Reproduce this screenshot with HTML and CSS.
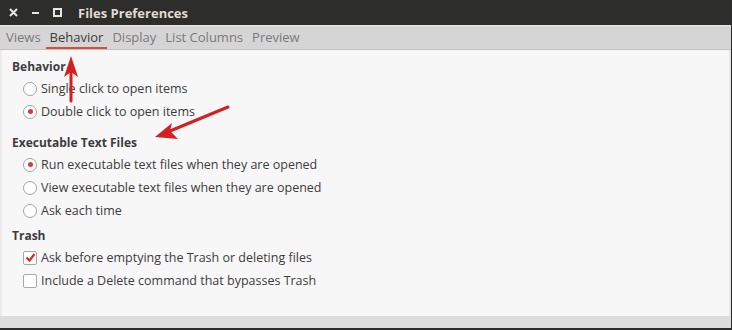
FILE: index.html
```
<html>

<head>
	<link rel="stylesheet" href="styles.css">
</head>

<body>
	<div class="window">
		<div class="titlebar">
			<span class="win-btn">
				<svg width="9" height="9" viewBox="0 0 9 9"><path d="M1,1 L8,8 M8,1 L1,8" stroke="#e6e6e6" stroke-width="2" /></svg>
			</span>
			<span class="win-btn">
				<svg width="9" height="9" viewBox="0 0 9 9"><path d="M1,5 L8,5" stroke="#e6e6e6" stroke-width="2" /></svg>
			</span>
			<span class="win-btn">
				<svg width="9" height="9" viewBox="0 0 9 9"><rect x="1" y="1" width="7" height="7" fill="none" stroke="#e6e6e6" stroke-width="2" /></svg>
			</span>
			<span class="title">Files Preferences</span>
		</div>

		<div class="tabs">
			<span class="tab">Views</span>
			<span class="tab active">Behavior</span>
			<span class="tab">Display</span>
			<span class="tab">List Columns</span>
			<span class="tab">Preview</span>
		</div>

		<div class="content">
			<div class="section">
				<div class="section-title">Behavior</div>
				<div class="row"><span class="radio"></span>Single click to open items</div>
				<div class="row"><span class="radio checked"></span>Double click to open items</div>
			</div>
			<div class="section exec">
				<div class="section-title">Executable Text Files</div>
				<div class="row"><span class="radio checked"></span>Run executable text files when they are opened</div>
				<div class="row"><span class="radio"></span>View executable text files when they are opened</div>
				<div class="row"><span class="radio"></span>Ask each time</div>
			</div>
			<div class="section trash">
				<div class="section-title">Trash</div>
				<div class="row"><span class="check checked">
					<svg width="11" height="11" viewBox="0 0 11 11"><path d="M1.5,5.5 L4.5,8.5 L9.5,2" fill="none" stroke="#d12b2b" stroke-width="2.2" /></svg>
				</span>Ask before emptying the Trash or deleting files</div>
				<div class="row"><span class="check"></span>Include a Delete command that bypasses Trash</div>
			</div>

			<!-- annotation arrows over the dialog -->
			<svg class="arrows" width="732" height="330" viewBox="0 0 732 330">
				<path d="M71,101 L71,72" stroke="#d42020" stroke-width="3" stroke-linecap="round" />
				<path d="M71,56 L64,77 L71,72 L78,77 Z" fill="#d42020" />
				<path d="M228,107 L170,131" stroke="#d42020" stroke-width="3" stroke-linecap="round" />
				<path d="M155,137 L172,123 L170,131 L178,139 Z" fill="#d42020" />
			</svg>
		</div>

		<div class="footer"></div>
	</div>
</body>

</html>
```

FILE: styles.css
```
body {
	margin: 0;
	width: 732px;
	height: 330px;
	background-color: #2b2b2b;
	font-family: "Open Sans", "DejaVu Sans", sans-serif;
	font-size: 12.5px;
	color: #3c3c3c;
	overflow: hidden;
}

.window {
	width: 731px;
	height: 328px;
	position: relative;
}

.titlebar {
	height: 25px;
	display: flex;
	align-items: center;
	padding-left: 9px;
	background-color: #2d2d2b;
}

.win-btn {
	width: 22px;
	display: flex;
	align-items: center;
}

.titlebar .title {
	margin-left: 3px;
	color: #dfdbd2;
	font-weight: bold;
	font-size: 13px;
}

.tabs {
	height: 23px;
	display: flex;
	align-items: center;
	gap: 9px;
	padding-left: 6px;
	background-color: #d5d5d5;
	border-top: 1px solid #e8e8e8;
	border-bottom: 1px solid #c2c2c2;
	font-size: 13px;
}

.tab {
	color: #7a7a7a;
	height: 23px;
	line-height: 23px;
	box-sizing: border-box;
}

.tab.active {
	color: #3c3c3c;
	border-bottom: 2px solid #dd4b39;
	padding: 0 4px;
	margin: 0 -4px;
}

.content {
	height: 266px;
	box-sizing: border-box;
	padding-top: 7px;
	background-color: #f7f7f7;
	border-left: 2px solid #ececec;
	border-right: 2px solid #e6e6e6;
}

.section-title {
	height: 20px;
	line-height: 20px;
	padding-left: 10px;
	font-weight: bold;
	font-size: 12px;
}

.section.exec {
	margin-top: 10px;
}

.section.trash {
	margin-top: 4px;
}

.row {
	height: 23px;
	display: flex;
	align-items: center;
	padding-left: 21px;
}

.radio {
	width: 12px;
	height: 12px;
	border: 1px solid #a3a3a3;
	border-radius: 50%;
	background-color: #ffffff;
	margin-right: 4px;
	display: flex;
	align-items: center;
	justify-content: center;
}

.radio.checked::after {
	content: "";
	width: 5px;
	height: 5px;
	border-radius: 50%;
	background-color: #d23c3c;
}

.check {
	width: 12px;
	height: 12px;
	border: 1px solid #a8a8a8;
	border-radius: 2px;
	background-color: #ffffff;
	margin-right: 4px;
	display: flex;
	align-items: center;
	justify-content: center;
}

.arrows {
	position: absolute;
	left: 0;
	top: 0;
	pointer-events: none;
}

.footer {
	height: 12px;
	background-color: #dcdcdc;
}
```
